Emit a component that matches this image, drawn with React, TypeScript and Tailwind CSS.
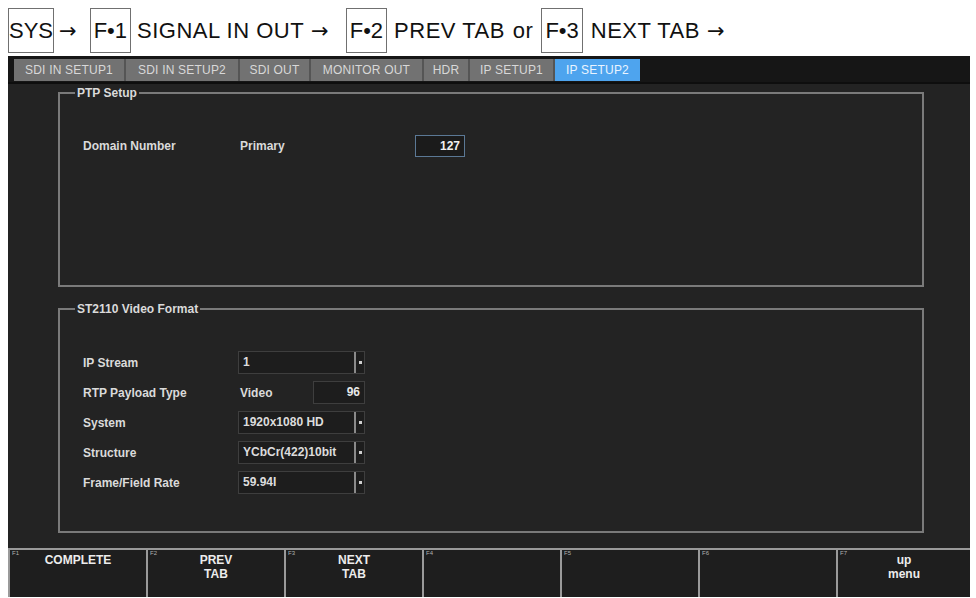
import { ReactNode } from 'react';

const tabs = [
    { label: 'SDI IN SETUP1', w: 'w-[112px]' },
    { label: 'SDI IN SETUP2', w: 'w-[114px]' },
    { label: 'SDI OUT', w: 'w-[71px]' },
    { label: 'MONITOR OUT', w: 'w-[113px]' },
    { label: 'HDR', w: 'w-[46px]' },
    { label: 'IP SETUP1', w: 'w-[85px]' },
];

const keys = [
    { f: 'F1', lines: ['COMPLETE'] },
    { f: 'F2', lines: ['PREV', 'TAB'] },
    { f: 'F3', lines: ['NEXT', 'TAB'] },
    { f: 'F4', lines: [] },
    { f: 'F5', lines: [] },
    { f: 'F6', lines: [] },
    { f: 'F7', lines: ['up', 'menu'] },
];

function KeyBox({ children, pad = true }: { children: ReactNode; pad?: boolean }) {
    return (
        <span className={`inline-flex h-[45px] items-center border border-[#707070] tracking-normal ${pad ? 'px-[3px]' : 'px-0'}`}>
            {children}
        </span>
    );
}

function Arrow() {
    return <span className="font-['DejaVu_Sans',sans-serif] text-[21px]">→</span>;
}

function Select({ value }: { value: string }) {
    return (
        <div className="flex h-[23px] w-[127px] items-stretch border border-[#3e3e3e] bg-[#1d1d1d]">
            <span className="flex-1 pl-[4px] leading-[21px] text-[#dcdcdc]">{value}</span>
            <span className="flex w-[10px] items-center justify-center border-l-2 border-[#8a8a8a]">
                <span className="h-[3px] w-[3px] bg-[#cfcfcf]" />
            </span>
        </div>
    );
}

function Row({ label, children }: { label: string; children: ReactNode }) {
    return (
        <div className="flex h-[23px] items-center">
            <span className="w-[155px] text-[#dadada]">{label}</span>
            {children}
        </div>
    );
}

export default function App() {
    return (
        <div className="flex h-[598px] w-[976px] flex-col bg-white font-['Liberation_Sans',Arial,sans-serif]">
            {/* Navigation path */}
            <div className="flex h-[56px] items-start pl-[8px] pt-[8px] text-[22px] leading-[45px] text-[#111]">
                <KeyBox pad={false}>SYS</KeyBox>
                <span className="ml-[5px]"><Arrow /></span>
                <span className="ml-[13px]"><KeyBox>F•1</KeyBox></span>
                <span className="ml-[6px] tracking-[0.5px]">SIGNAL IN OUT</span>
                <span className="ml-[7px]"><Arrow /></span>
                <span className="ml-[17px]"><KeyBox>F•2</KeyBox></span>
                <span className="ml-[7px] tracking-[0.5px]">PREV TAB</span>
                <span className="ml-[8px] tracking-[0.5px]">or</span>
                <span className="ml-[8px]"><KeyBox>F•3</KeyBox></span>
                <span className="ml-[8px] tracking-[0.5px]">NEXT TAB</span>
                <span className="ml-[7px]"><Arrow /></span>
            </div>

            {/* Monitor screen */}
            <div className="ml-[8px] flex h-[541px] w-[962px] flex-col bg-[#232323] text-[12px] font-bold">
                <div className="flex h-[28px] items-start border-b-2 border-[#0e0e0e] bg-[#161616] pl-[6px] pt-[3px]">
                    {tabs.map((t) => (
                        <div
                            key={t.label}
                            className={`${t.w} flex h-[22px] items-center justify-center border-r-2 border-[#555] bg-[#727272] font-normal tracking-[0.2px] text-[#d8d8d8]`}
                        >
                            {t.label}
                        </div>
                    ))}
                    <div className="flex h-[22px] w-[85px] items-center justify-center bg-[#4ea4ee] font-normal tracking-[0.2px] text-[#eaf4ff]">
                        IP SETUP2
                    </div>
                </div>

                <div className="flex flex-1 flex-col pl-[50px] pr-[46px] pt-[2px]">
                    <fieldset className="h-[201px] border-2 border-[#7a7a7a] pl-[23px] pt-[35px]">
                        <legend className="-ml-[8px] px-[2px] leading-[14px] text-[#dadada]">PTP Setup</legend>
                        <div className="flex h-[22px] items-center">
                            <span className="w-[157px] text-[#dadada]">Domain Number</span>
                            <span className="w-[175px] text-[#dadada]">Primary</span>
                            <span className="h-[22px] w-[50px] border border-[#5b7895] bg-[#1b1b1b] pr-[4px] text-right leading-[20px] text-[#f0f0f0]">
                                127
                            </span>
                        </div>
                    </fieldset>

                    <fieldset className="mt-[15px] h-[231px] border-2 border-[#7a7a7a] pl-[23px] pt-[35px]">
                        <legend className="-ml-[8px] px-[2px] leading-[14px] text-[#dadada]">ST2110 Video Format</legend>
                        <div className="flex flex-col gap-[7px]">
                            <Row label="IP Stream">
                                <Select value="1" />
                            </Row>
                            <Row label="RTP Payload Type">
                                <span className="w-[75px] pl-[2px] text-[#dadada]">Video</span>
                                <span className="h-[23px] w-[52px] border border-[#3e3e3e] bg-[#1d1d1d] pr-[4px] text-right leading-[21px] text-[#e8e8e8]">
                                    96
                                </span>
                            </Row>
                            <Row label="System">
                                <Select value="1920x1080 HD" />
                            </Row>
                            <Row label="Structure">
                                <Select value="YCbCr(422)10bit" />
                            </Row>
                            <Row label="Frame/Field Rate">
                                <Select value="59.94I" />
                            </Row>
                        </div>
                    </fieldset>
                </div>

                {/* Function keys */}
                <div className="flex h-[49px] border-t-2 border-[#9a9a9a]">
                    {keys.map((k, i) => (
                        <div
                            key={k.f}
                            className={`relative flex ${i === 6 ? 'flex-1' : 'w-[138px]'} flex-col items-center border-l-2 border-[#9a9a9a] bg-[#1e1e1e] pt-[3px] text-[12px] leading-[14px] text-[#ececec]`}
                        >
                            <span className="absolute left-[2px] top-[0px] text-[6px] font-normal leading-[7px] text-[#b0b0b0]">{k.f}</span>
                            {k.lines.map((l) => (
                                <span key={l}>{l}</span>
                            ))}
                        </div>
                    ))}
                </div>
            </div>
        </div>
    );
}
